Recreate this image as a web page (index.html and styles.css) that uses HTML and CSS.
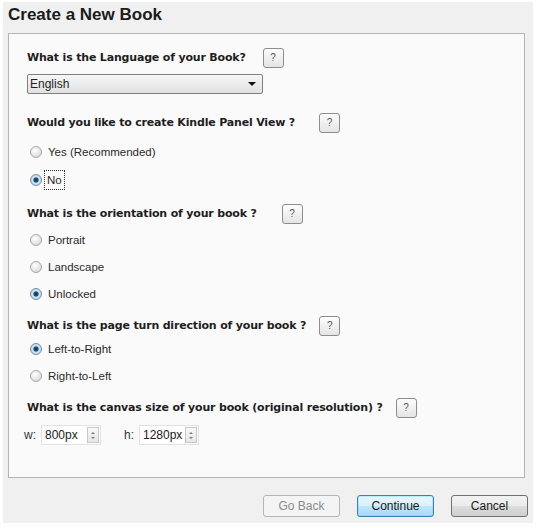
FILE: index.html
```html
<!DOCTYPE html>
<html>
<head>
<meta charset="utf-8">
<link rel="stylesheet" href="styles.css">
</head>
<body>
<div class="dialog">
  <div class="title">Create a New Book</div>
  <div class="panel">
    <div class="q q1"><span class="qt">What is the Language of your Book?</span><span class="help">?</span></div>
    <div class="select"><span>English</span><span class="arrow"></span></div>

    <div class="q q2"><span class="qt">Would you like to create Kindle Panel View ?</span><span class="help">?</span></div>
    <div class="opt o-first"><span class="radio"></span><span class="lbl">Yes (Recommended)</span></div>
    <div class="opt o-next"><span class="radio on"></span><span class="lbl focus">No</span></div>

    <div class="q q3"><span class="qt">What is the orientation of your book ?</span><span class="help">?</span></div>
    <div class="opt o-tight"><span class="radio"></span><span class="lbl">Portrait</span></div>
    <div class="opt o-next2"><span class="radio"></span><span class="lbl">Landscape</span></div>
    <div class="opt o-next2"><span class="radio on"></span><span class="lbl">Unlocked</span></div>

    <div class="q q4"><span class="qt">What is the page turn direction of your book ?</span><span class="help">?</span></div>
    <div class="opt o-close"><span class="radio on"></span><span class="lbl">Left-to-Right</span></div>
    <div class="opt o-next2"><span class="radio"></span><span class="lbl">Right-to-Left</span></div>

    <div class="q q5"><span class="qt">What is the canvas size of your book (original resolution) ?</span><span class="help">?</span></div>
    <div class="sizes">
      <span class="slbl">w:</span>
      <span class="spin"><span class="val">800px</span><span class="arrows"><i class="up"></i><i class="down"></i></span></span>
      <span class="slbl hl">h:</span>
      <span class="spin"><span class="val">1280px</span><span class="arrows"><i class="up"></i><i class="down"></i></span></span>
    </div>
  </div>
  <div class="buttons">
    <span class="btn disabled">Go Back</span>
    <span class="btn primary">Continue</span>
    <span class="btn">Cancel</span>
  </div>
</div>
</body>
</html>
```

FILE: styles.css
```css
html, body { margin: 0; padding: 0; background: #ffffff; }
body { font-family: "Liberation Sans", Arial, sans-serif; color: #1e1e1e; }

.dialog {
  margin: 2px 0 0 3px;
  width: 530px;
  height: 521px;
  background: #f0f0f0;
  display: flex;
  flex-direction: column;
}
.title {
  font-size: 17px;
  font-weight: bold;
  color: #1b1b1b;
  height: 31px;
  line-height: 26px;
  padding-left: 5px;
}
.panel {
  margin-left: 5px;
  width: 517px;
  height: 445px;
  box-sizing: border-box;
  border: 1px solid #b4b4b4;
  background: #fafafa;
  padding: 13px 0 0 18px;
  display: flex;
  flex-direction: column;
  align-items: flex-start;
}
.q {
  display: flex;
  align-items: center;
  height: 21px;
  gap: 16px;
  font-family: "DejaVu Sans", Verdana, sans-serif;
  font-size: 11px;
  letter-spacing: -0.18px;
  font-weight: bold;
  color: #1e1e1e;
}
.q1 { gap: 17px; }
.q2 { margin-top: 18px; gap: 24px; }
.q3 { margin-top: 13px; gap: 25px; }
.q4 { margin-top: 11px; gap: 13px; }
.q5 { margin-top: 11px; gap: 13px; }
.help {
  width: 21px;
  height: 20px;
  box-sizing: border-box;
  border: 1px solid #8d8d8d;
  border-radius: 3px;
  background: linear-gradient(#fdfdfd, #e4e4e4);
  font-family: "Liberation Sans", Arial, sans-serif;
  font-weight: normal;
  letter-spacing: 0;
  font-size: 10px;
  color: #555;
  display: flex;
  align-items: center;
  justify-content: center;
}
.select {
  margin-top: 6px;
  width: 236px;
  height: 20px;
  box-sizing: border-box;
  border: 1px solid #7f7f7f;
  border-radius: 2px;
  background: linear-gradient(#f7f7f7, #e0e0e0);
  font-size: 12px;
  display: flex;
  align-items: center;
  justify-content: space-between;
  padding: 0 6px 0 2px;
}
.arrow {
  width: 0; height: 0;
  border-left: 4px solid transparent;
  border-right: 4px solid transparent;
  border-top: 4px solid #111;
}
.opt {
  display: flex;
  align-items: center;
  height: 20px;
  font-size: 11.5px;
  color: #2a2a2a;
  padding-left: 3px;
}
.o-first { margin-top: 9px; }
.o-next { margin-top: 8px; }
.o-tight { margin-top: 6px; }
.o-next2 { margin-top: 7px; }
.o-close { margin-top: 3px; }
.radio {
  width: 12px;
  height: 12px;
  box-sizing: border-box;
  border-radius: 50%;
  border: 1px solid #a8a8a8;
  background: radial-gradient(circle at 40% 35%, #ffffff 0, #dedede 70%, #c8c8c8 100%);
  margin-right: 6px;
}
.radio.on {
  border-color: #6f8fa8;
  background: radial-gradient(circle, #0b3350 0, #1a5a82 30%, #d5e4ef 45%, #b6cbdc 100%);
}
.lbl { line-height: 16px; }
.lbl.focus {
  outline: 1px dotted #333;
  outline-offset: 0;
  padding: 1px 2px;
  margin-left: -3px;
}
.sizes {
  margin-top: 7px;
  margin-left: -3px;
  display: flex;
  align-items: center;
  height: 20px;
  font-size: 12px;
}
.slbl { color: #333; width: 17px; }
.slbl.hl { margin-left: 23px; width: 15px; }
.spin {
  width: 60px;
  height: 20px;
  box-sizing: border-box;
  border: 1px solid #e2e2e2;
  background: #fff;
  display: flex;
  align-items: center;
  justify-content: space-between;
  padding-left: 3px;
  color: #222;
}
.arrows {
  width: 12px;
  height: 16px;
  margin-right: 1px;
  box-sizing: border-box;
  border: 1px solid #c8c8c8;
  background: linear-gradient(#f8f8f8, #e6e6e6);
  display: flex;
  flex-direction: column;
  align-items: center;
  justify-content: center;
  gap: 3px;
}
.arrows i {
  width: 0; height: 0;
  border-left: 2px solid transparent;
  border-right: 2px solid transparent;
}
.arrows .up { border-bottom: 2px solid #6a7f93; }
.arrows .down { border-top: 2px solid #6a7f93; }
.buttons {
  margin-top: 17px;
  display: flex;
  justify-content: flex-end;
  gap: 17px;
  padding-right: 5px;
}
.btn {
  width: 77px;
  height: 22px;
  box-sizing: border-box;
  border: 1px solid #707070;
  border-radius: 3px;
  background: linear-gradient(#f2f2f2 0, #ebebeb 50%, #dddddd 51%, #cfcfcf 100%);
  font-size: 12px;
  color: #1a1a1a;
  display: flex;
  align-items: center;
  justify-content: center;
}
.btn.disabled {
  border-color: #b5b5b5;
  background: #f4f4f4;
  color: #8a8a8a;
}
.btn.primary {
  border-color: #3c7fb1;
  box-shadow: inset 0 0 0 1px #48dbfb55;
  background: linear-gradient(#eaf6fd 0, #d9f0fc 50%, #bee6fd 51%, #a7d9f5 100%);
}
```
